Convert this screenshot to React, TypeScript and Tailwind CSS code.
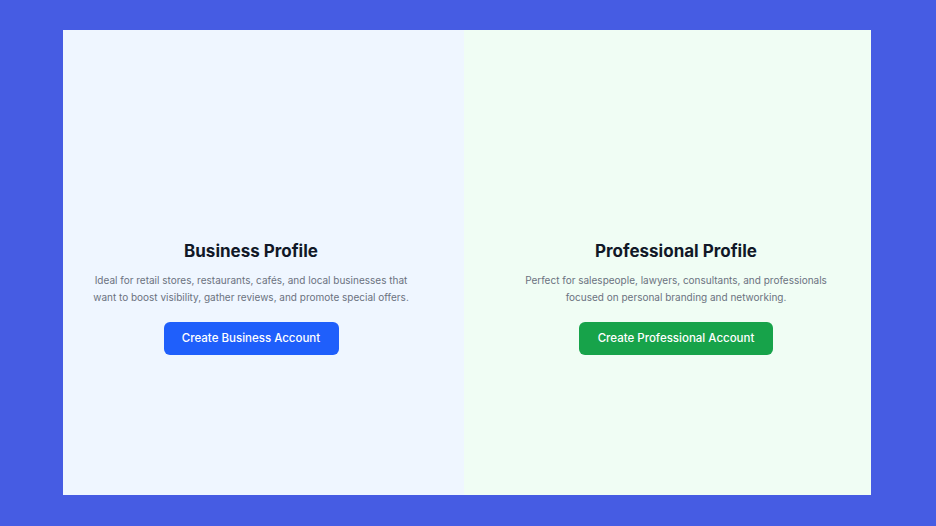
const App = () => {
  return (
    <div className="w-[936px] h-[526px] bg-[#465ce3] pl-[63px] pr-[65px] pt-[30px] pb-[31px]" style={{ fontFamily: "Inter, 'Noto Sans', sans-serif" }}>
      <div className="flex h-full">
        {/* BUSINESS */}
        <div className="w-[401px] bg-[#eff6ff] flex flex-col items-center pt-[210px] pr-[25px] text-center">
          <h2 className="text-[17px] font-bold text-[#111827] leading-[22px]">Business Profile</h2>
          <p className="mt-[10px] text-[10px] leading-[17px] text-[#6b7280] max-w-[322px]">
            Ideal for retail stores, restaurants, cafés, and local businesses that want to boost visibility, gather reviews, and promote special offers.
          </p>
          <button className="mt-[16px] h-[33px] w-[175px] rounded-md bg-[#1f5ffb] text-white text-[11.5px] font-medium">
            Create Business Account
          </button>
        </div>

        {/* PROFESSIONAL */}
        <div className="flex-1 bg-[#f0fdf4] flex flex-col items-center pt-[210px] pl-[17px] text-center">
          <h2 className="text-[17px] font-bold text-[#111827] leading-[22px]">Professional Profile</h2>
          <p className="mt-[10px] text-[10px] leading-[17px] text-[#6b7280] max-w-[310px]">
            Perfect for salespeople, lawyers, consultants, and professionals focused on personal branding and networking.
          </p>
          <button className="mt-[16px] h-[33px] w-[194px] rounded-md bg-[#17a34a] text-white text-[11.5px] font-medium">
            Create Professional Account
          </button>
        </div>
      </div>
    </div>
  );
};

export default App;
